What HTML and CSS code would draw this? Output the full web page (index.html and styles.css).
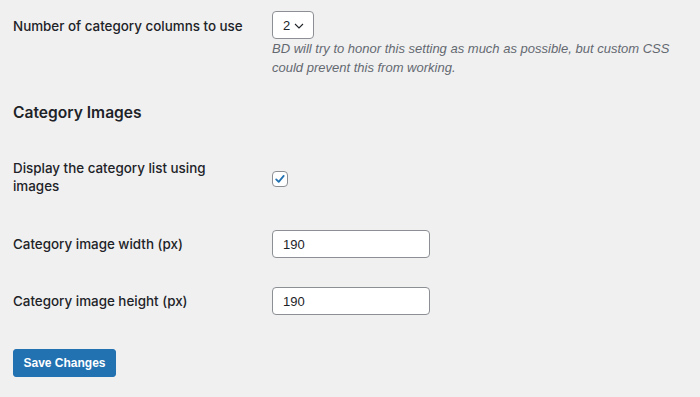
FILE: index.html
```html
<!DOCTYPE html>
<html lang="en">
<head>
    <meta charset="UTF-8">
    <title>Settings</title>
    <link rel="stylesheet" href="styles.css">
</head>
<body>
    <form class="settings">
        <div class="row row-top">
            <label class="label" for="cat-cols">Number of category columns to use</label>
            <div class="field">
                <span class="select-wrap">
                    <select id="cat-cols" class="select">
                        <option>2</option>
                    </select>
                    <svg class="chevron" width="10" height="6" viewBox="0 0 10 6"><path d="M1 1l4 4 4-4" fill="none" stroke="#1d2327" stroke-width="1.1"/></svg>
                </span>
                <p class="description">BD will try to honor this setting as much as possible, but custom CSS could prevent this from working.</p>
            </div>
        </div>

        <h2 class="section-title">Category Images</h2>

        <div class="row row-check">
            <label class="label label-wrap" for="cat-img">Display the category list using images</label>
            <div class="field">
                <span class="checkbox" id="cat-img">
                    <svg width="12" height="12" viewBox="0 0 12 12"><path d="M2.2 6.4l2.5 2.5 5-6" fill="none" stroke="#2271b1" stroke-width="1.8" stroke-linecap="round" stroke-linejoin="round"/></svg>
                </span>
            </div>
        </div>

        <div class="row row-width">
            <label class="label" for="img-w">Category image width (px)</label>
            <div class="field"><input id="img-w" class="text-input" type="text" value="190"></div>
        </div>

        <div class="row row-height">
            <label class="label" for="img-h">Category image height (px)</label>
            <div class="field"><input id="img-h" class="text-input" type="text" value="190"></div>
        </div>

        <button type="button" class="button-primary">Save Changes</button>
    </form>
</body>
</html>
```

FILE: styles.css
```css
html {
    background: #f0f0f1;
}
body {
    margin: 0;
    padding: 11px 13px 0;
    font-family: "Liberation Sans", Arial, sans-serif;
    font-size: 13px;
    color: #1d2327;
}

.row {
    display: grid;
    grid-template-columns: 259px 1fr;
    align-items: center;
}
.row-top {
    align-items: start;
}
.label {
    font-family: Inter, "Liberation Sans", sans-serif;
    font-weight: 500;
    font-size: 13.4px;
    line-height: 18px;
}
.row-top .label {
    padding-top: 6px;
}
.label-wrap {
    width: 215px;
}

/* select */
.select-wrap {
    position: relative;
    display: inline-block;
}
.select {
    -webkit-appearance: none;
    appearance: none;
    width: 42px;
    height: 28px;
    margin: 0;
    padding: 0 0 0 10px;
    border: 1px solid #8c8f94;
    border-radius: 4px;
    background: #fff;
    font-family: inherit;
    font-size: 13px;
    color: #1d2327;
}
.chevron {
    position: absolute;
    left: 22px;
    top: 12px;
    pointer-events: none;
}
.description {
    margin: 0;
    font-style: italic;
    color: #646970;
    line-height: 19px;
    font-size: 13px;
}

.section-title {
    margin: 26px 0 0;
    font-family: Inter, "Liberation Sans", sans-serif;
    font-size: 15.6px;
    line-height: 20px;
    font-weight: 600;
}

.row-check {
    margin-top: 36px;
}
.checkbox {
    display: flex;
    align-items: center;
    justify-content: center;
    width: 14px;
    height: 14px;
    margin-top: 3px;
    border: 1px solid #8c8f94;
    border-radius: 4px;
    background: #fff;
}

.row-width {
    margin-top: 35px;
}
.row-height {
    margin-top: 29px;
}
.text-input {
    box-sizing: border-box;
    width: 158px;
    height: 28px;
    margin: 0;
    padding: 0 10px;
    border: 1px solid #8c8f94;
    border-radius: 4px;
    background: #fff;
    font-family: inherit;
    font-size: 13px;
    color: #1d2327;
}

.button-primary {
    display: block;
    margin-top: 34px;
    width: 103px;
    height: 28px;
    padding: 0;
    border: 1px solid #2271b1;
    border-radius: 3px;
    background: #2271b1;
    color: #fff;
    font-family: inherit;
    font-size: 12px;
    font-weight: 700;
}
```
